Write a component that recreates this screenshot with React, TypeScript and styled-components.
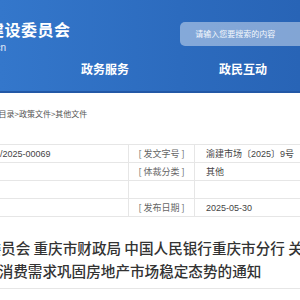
import styled, { createGlobalStyle } from "styled-components";

const GlobalStyle = createGlobalStyle`
  html, body {
    margin: 0;
    padding: 0;
    background: #fff;
    overflow: hidden;
    font-family: "Noto Sans CJK SC", "Noto Sans", sans-serif;
  }
`;

interface InfoRow {
  label1: string;
  value1: string;
  label2: string;
  value2: string;
}

const rows: InfoRow[] = [
  { label1: "[ 索 引 号 ]", value1: "11500000I/2025-00069", label2: "[ 发文字号 ]", value2: "渝建市场〔2025〕9号" },
  { label1: "[ 主题分类 ]", value1: "", label2: "[ 体裁分类 ]", value2: "其他" },
  { label1: "[ 发文机关 ]", value1: "", label2: "", value2: "" },
  { label1: "[ 成文日期 ]", value1: "", label2: "[ 发布日期 ]", value2: "2025-05-30" },
];

const titleLines = [
  "重庆市住房和城乡建设委员会 重庆市财政局 中国人民银行重庆市分行 关于进一步激发住房",
  "消费需求巩固房地产市场稳定态势的通知",
];

function App() {
  return (
    <>
      <GlobalStyle />
      <Header>
        <Wrap>
          <TopRow>
            <Brand>
              <SiteName>重庆市住房和城乡建设委员会</SiteName>
              <SiteUrl>zfcxjw.cq.gov.cn</SiteUrl>
            </Brand>
            <Search>请输入您要搜索的内容</Search>
          </TopRow>
          <Nav>
            <NavItem>政务公开</NavItem>
            <NavItem>政务服务</NavItem>
            <NavItem>政民互动</NavItem>
          </Nav>
        </Wrap>
      </Header>
      <Wrap>
        <Crumbs>当前位置：首页&gt;信息公开目录&gt;政策文件&gt;其他文件</Crumbs>
        <Table>
          <tbody>
            {rows.map((r, i) => (
              <tr key={i}>
                <Label>{r.label1}</Label>
                <Value $w={170}>{r.value1}</Value>
                <Label>{r.label2}</Label>
                <Value $w={200}>{r.value2}</Value>
              </tr>
            ))}
          </tbody>
        </Table>
        <Title>
          {titleLines.map((line) => (
            <TitleLine key={line}>{line}</TitleLine>
          ))}
        </Title>
        <Rule />
      </Wrap>
    </>
  );
}

const Header = styled.header`
  height: 91px;
  background: linear-gradient(90deg, #3477cb 0%, #2c6bbe 60%, #2864b6 100%);
  border-bottom: 2px solid #2358a6;
`;

const Wrap = styled.div`
  width: 500px;
  margin-left: -120px;
`;

const TopRow = styled.div`
  display: flex;
  align-items: flex-start;
  padding-top: 19px;
  height: 47px;
  box-sizing: border-box;
`;

const Brand = styled.div`
  display: flex;
  flex-direction: column;
  margin-left: -24px;
  width: 325px;
`;

const SiteName = styled.div`
  color: #fff;
  font-size: 16px;
  font-weight: 700;
  line-height: 20px;
  white-space: nowrap;
  letter-spacing: 0.5px;
`;

const SiteUrl = styled.div`
  width: 150px;
  text-align: right;
  color: #e3ecf8;
  font-family: "Liberation Sans", Arial, sans-serif;
  font-size: 10px;
  line-height: 12px;
  margin-top: 3px;
  white-space: nowrap;
`;

const Search = styled.div`
  margin-top: 3px;
  height: 24px;
  width: 200px;
  border-radius: 5px;
  background: rgba(255, 255, 255, 0.42);
  color: #f4f8fd;
  font-size: 8px;
  line-height: 24px;
  padding-left: 15px;
  box-sizing: border-box;
  white-space: nowrap;
`;

const Nav = styled.nav`
  display: flex;
  padding-left: 63px;
  gap: 90px;
  height: 44px;
  align-items: center;
`;

const NavItem = styled.span`
  color: #fff;
  font-size: 12px;
  font-weight: 700;
  white-space: nowrap;
  line-height: 14px;
`;

const Crumbs = styled.div`
  margin-top: 14px;
  height: 14px;
  line-height: 14px;
  font-size: 8px;
  color: #555;
  padding-left: 26px;
  white-space: nowrap;
`;

const Table = styled.table`
  margin-top: 23px;
  width: 500px;
  border-collapse: collapse;
  table-layout: fixed;
  font-size: 9px;
  color: #555;
  td {
    border-top: 1px solid #e6e6e6;
    border-bottom: 1px solid #e6e6e6;
    height: 17px;
    padding: 0;
    white-space: nowrap;
    overflow: hidden;
  }
`;

const Label = styled.td`
  width: 65px;
  text-align: center;
  border-left: 1px solid #e6e6e6;
  border-right: 1px solid #e6e6e6;
  color: #666;
`;

const Value = styled.td<{ $w: number }>`
  width: ${(p) => p.$w}px;
  padding-left: 11px !important;
  font-family: "Liberation Sans", "Noto Sans CJK SC", sans-serif;
  color: #444;
`;

const Title = styled.h1`
  margin: 19px 0 0;
  display: flex;
  flex-direction: column;
  align-items: center;
  font-size: 14.6px;
  font-weight: 500;
  color: #333;
  line-height: 23px;
`;

const TitleLine = styled.span`
  white-space: nowrap;
`;

const Rule = styled.div`
  margin-top: 6px;
  border-top: 1px solid #e6e6e6;
`;

export default App;
